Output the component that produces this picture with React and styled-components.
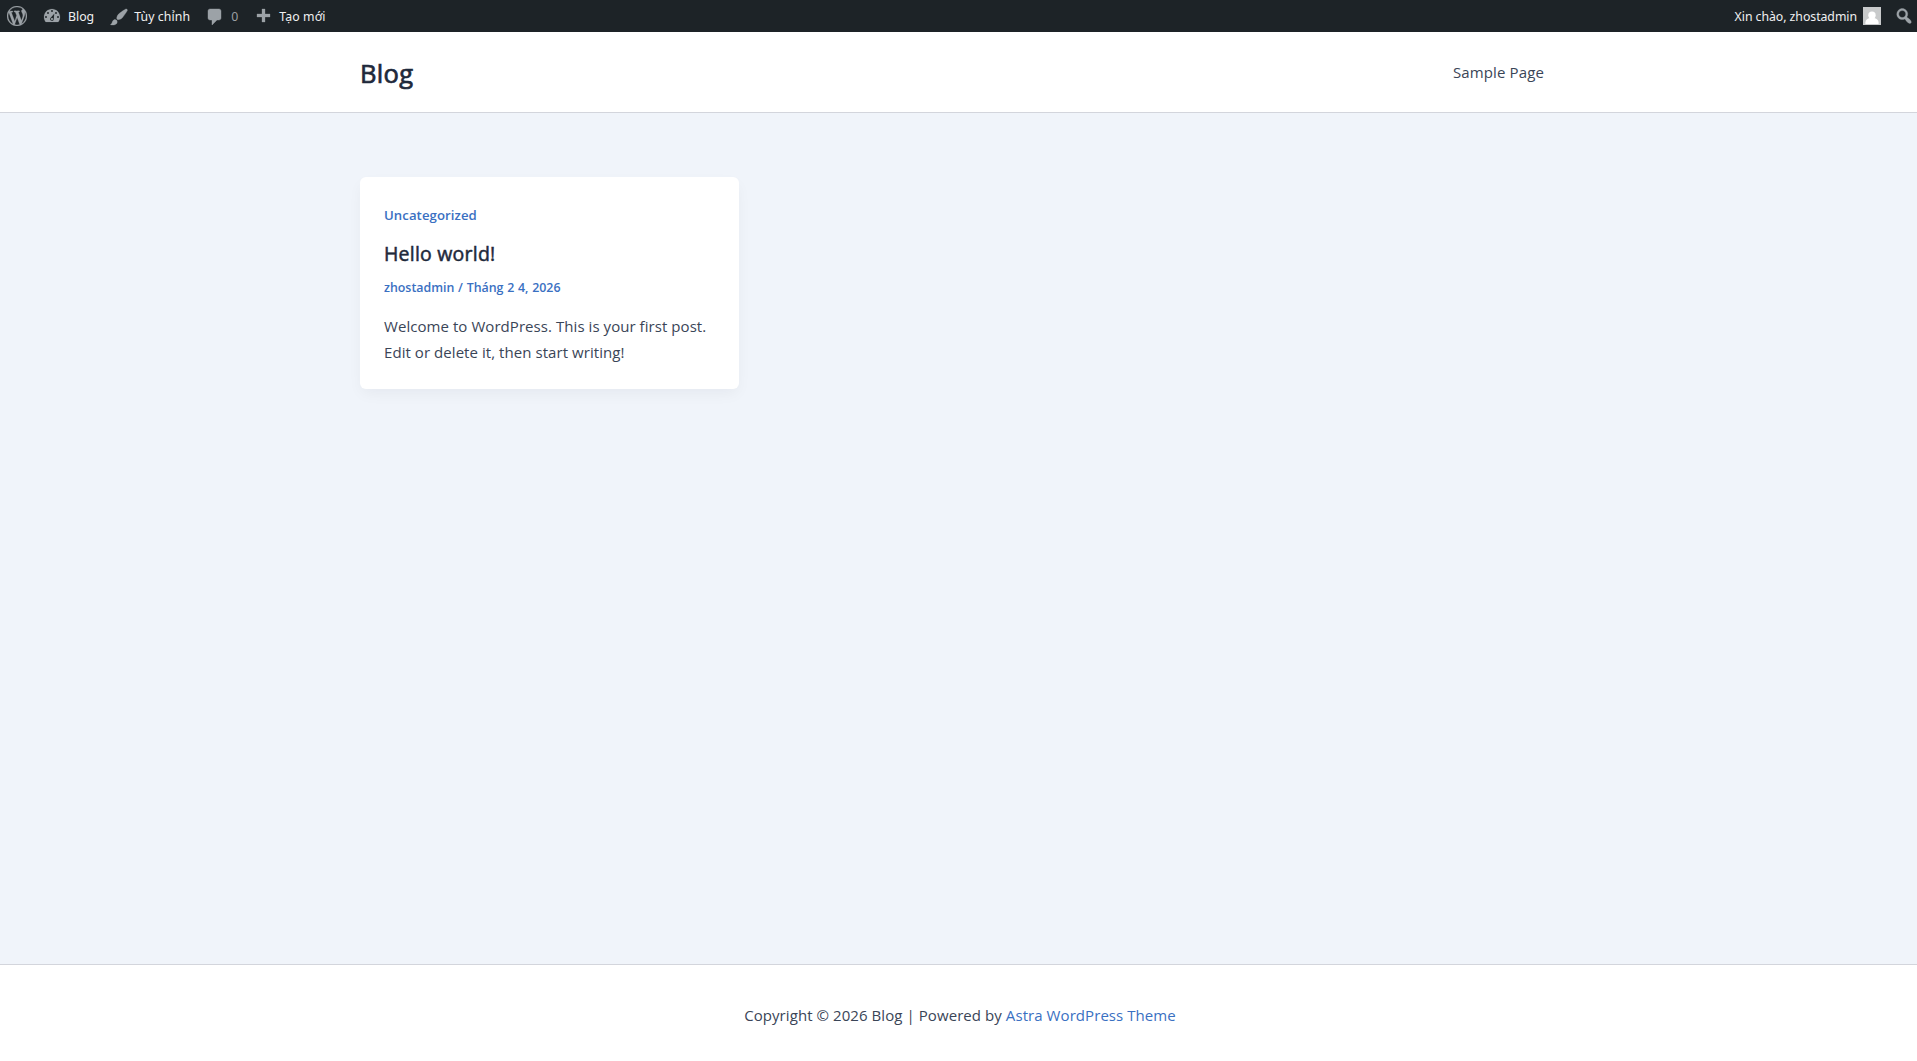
import React from "react";
import styled, { createGlobalStyle } from "styled-components";

const GlobalStyle = createGlobalStyle`
  *, *::before, *::after { box-sizing: border-box; }
  body {
    margin: 0;
    background: #f0f4fa;
    color: #3a4557;
    font-family: "Open Sans", "Noto Sans", sans-serif;
    font-size: 15px;
    overflow: hidden;
  }
  a { color: inherit; text-decoration: none; }
  h2, p { margin: 0; }
`;

const Page = styled.div`
  display: flex;
  flex-direction: column;
  height: 1061px;
`;

const AdminBar = styled.nav`
  display: flex;
  justify-content: space-between;
  height: 32px;
  background: #1d2327;
  color: #f0f0f1;
  font-family: "Noto Sans", "Open Sans", sans-serif;
  font-size: 12.3px;
  line-height: 32px;
`;

const BarGroup = styled.div`
  display: flex;
  padding: ${(p) => (p.$end ? "0 3px 0 0" : "0 0 0 7px")};
`;

const BarItem = styled.a`
  display: flex;
  align-items: center;
  gap: ${(p) => p.$gap ?? 6}px;
  margin-right: ${(p) => p.$after ?? 0}px;
`;

const BarLabel = styled.span`
  padding-top: 1px;
  color: ${(p) => (p.$muted ? "#9b9fa3" : "inherit")};
  letter-spacing: ${(p) => p.$track ?? 0}px;
  white-space: nowrap;
`;

const Glyph = styled.svg`
  display: block;
  flex: none;
  width: 20px;
  height: 20px;
  margin-top: ${(p) => p.$drop ?? 0}px;
  fill: #9ca2a7;
  stroke: #9ca2a7;
  stroke-width: ${(p) => p.$weight ?? 0};
`;

const Avatar = styled.svg`
  display: block;
  flex: none;
  width: 18px;
  height: 18px;
`;

const Header = styled.header`
  height: 81px;
  background: #fff;
  border-bottom: 1px solid #d3d5dc;
`;

const Container = styled.div`
  display: flex;
  align-items: ${(p) => (p.$top ? "flex-start" : "center")};
  justify-content: space-between;
  width: 1240px;
  height: 100%;
  margin: 0 0 0 340px;
  padding: 0 36px 0 20px;
`;

const SiteTitle = styled.a`
  padding-top: 2px;
  color: #1e293b;
  font-size: 25.5px;
  font-weight: 400;
  line-height: 30px;
  letter-spacing: 0.3px;
  -webkit-text-stroke: 0.7px #1e293b;
`;

const MenuLink = styled.a`
  line-height: 24px;
  letter-spacing: 0.12px;
`;

const Main = styled.main`
  flex: 1;
  padding-top: 64px;
`;

const Card = styled.article`
  display: flex;
  flex-direction: column;
  width: 379px;
  height: 212px;
  padding: 28px 24px 0;
  border-radius: 6px;
  background: #fff;
  box-shadow: 0 6px 15px -2px rgba(16, 24, 40, 0.05);
`;

const Category = styled.a`
  color: #3a70c2;
  font-size: 13.2px;
  font-weight: 600;
  line-height: 20px;
  letter-spacing: 0.06px;
`;

const PostTitle = styled.h2`
  margin-top: 16px;
  color: #1e293b;
  font-size: 19.5px;
  font-weight: 400;
  line-height: 26px;
  letter-spacing: 0.22px;
  -webkit-text-stroke: 0.5px #1e293b;
`;

const Meta = styled.div`
  margin-top: 12px;
  color: #3a70c2;
  font-size: 12.4px;
  font-weight: 600;
  line-height: 18px;
  word-spacing: 0.5px;
`;

const Excerpt = styled.p`
  margin-top: 16px;
  line-height: 26px;
  letter-spacing: 0.06px;
  white-space: nowrap;
`;

const Footer = styled.footer`
  display: flex;
  justify-content: center;
  height: 97px;
  padding: 37px 0 0 3px;
  border-top: 1px solid #d3d5dc;
  background: #fff;
  line-height: 26px;
  letter-spacing: 0.07px;
`;

const FooterLink = styled.a`
  color: #3a70c2;
`;

const icons = {
  wordpress:
    "M20 10c0-5.51-4.49-10-10-10C4.48 0 0 4.49 0 10c0 5.52 4.48 10 10 10 5.51 0 10-4.48 10-10zM7.78 15.37L4.37 6.22c.55-.02 1.17-.08 1.17-.08.5-.06.44-1.13-.06-1.11 0 0-1.45.11-2.37.11-.18 0-.37 0-.58-.01C4.12 2.69 6.87 1.11 10 1.11c2.33 0 4.45.87 6.05 2.34-.68-.11-1.65.39-1.65 1.58 0 .74.45 1.36.9 2.1.35.61.55 1.36.55 2.46 0 1.49-1.4 5-1.4 5l-3.03-8.37c.54-.02.82-.17.82-.17.5-.05.44-1.25-.06-1.22 0 0-1.44.12-2.38.12-.87 0-2.33-.12-2.33-.12-.5-.03-.56 1.2-.06 1.22l.92.08 1.26 3.41zM17.41 10c.24-.64.74-1.87.43-4.25.7 1.29 1.05 2.71 1.05 4.25 0 3.29-1.73 6.24-4.4 7.78.97-2.59 1.94-5.2 2.92-7.78zM6.1 18.09C3.12 16.65 1.11 13.53 1.11 10c0-1.3.23-2.48.72-3.59C3.25 10.3 4.67 14.2 6.1 18.09zm4.03-6.63l2.58 6.98c-.86.29-1.76.45-2.71.45-.79 0-1.57-.11-2.29-.33.81-2.38 1.62-4.74 2.42-7.1z",
  dashboard:
    "M3.76 16h12.48c1.1-1.37 1.76-3.11 1.76-5 0-4.42-3.58-8-8-8s-8 3.58-8 8c0 1.89.66 3.63 1.76 5zM10 4c.55 0 1 .45 1 1s-.45 1-1 1-1-.45-1-1 .45-1 1-1zM6 6c.55 0 1 .45 1 1s-.45 1-1 1-1-.45-1-1 .45-1 1-1zm8 0c.55 0 1 .45 1 1s-.45 1-1 1-1-.45-1-1 .45-1 1-1zM12.3 7.4L11.8 13.2a1.9 1.9 0 1 1-2.9-1.8zM4 10c.55 0 1 .45 1 1s-.45 1-1 1-1-.45-1-1 .45-1 1-1zm12 0c.55 0 1 .45 1 1s-.45 1-1 1-1-.45-1-1 .45-1 1-1zm-5 3c0-.55-.45-1-1-1s-1 .45-1 1 .45 1 1 1 1-.45 1-1z",
  brush:
    "M18.33 3.57s.27-.8-.31-1.36c-.53-.52-1.22-.24-1.22-.24-.61.3-5.76 3.47-7.67 5.57-.86.96-2.06 3.79-1.09 4.82.92.98 3.96-.17 4.79-1 2.06-2.06 5.21-7.17 5.5-7.79zM1.4 17.65c2.37-1.56 1.46-3.41 3.23-4.64.93-.65 2.22-.62 3.08.29.63.67.8 2.57-.16 3.46-1.57 1.45-4 1.55-6.15.89z",
  comment:
    "M5 2h9c1.1 0 2 .9 2 2v7c0 1.1-.9 2-2 2h-2l-5 5v-5H5c-1.1 0-2-.9-2-2V4c0-1.1.9-2 2-2z",
  plus: "M17 7v3h-5v5H9v-5H4V7h5V2h3v5h5z",
  search:
    "M12.14 4.18c1.87 1.87 2.11 4.75.72 6.89.12.1.22.21.36.31.2.16.47.36.81.59.34.24.56.39.66.47.42.31.73.57.94.78.32.32.6.65.84 1 .25.35.44.69.59 1.04.14.35.21.68.18 1-.02.32-.14.59-.36.81s-.49.34-.81.36c-.31.02-.65-.04-.99-.19-.35-.14-.7-.34-1.04-.59-.35-.24-.68-.52-1-.84-.21-.21-.47-.52-.77-.93-.1-.13-.25-.35-.47-.66-.22-.32-.4-.57-.56-.78-.16-.2-.29-.35-.44-.5-2.07 1.09-4.69.76-6.44-.98-2.14-2.15-2.14-5.64 0-7.78 2.15-2.15 5.63-2.15 7.78 0zm-1.41 6.36c1.36-1.37 1.36-3.58 0-4.95-1.37-1.37-3.59-1.37-4.95 0-1.37 1.37-1.37 3.58 0 4.95 1.36 1.37 3.58 1.37 4.95 0z",
};

const Icon = ({ name, drop, weight }) => (
  <Glyph viewBox="0 0 20 20" $drop={drop} $weight={weight} aria-hidden="true">
    <path fillRule="evenodd" d={icons[name]} />
  </Glyph>
);

export default function App() {
  return (
    <>
      <GlobalStyle />
      <Page>
        <AdminBar>
          <BarGroup>
            <BarItem href="#" $after={15}>
              <Icon name="wordpress" weight={0.25} />
            </BarItem>
            <BarItem href="#" $after={15}>
              <Icon name="dashboard" weight={0.15} />
              <BarLabel>Blog</BarLabel>
            </BarItem>
            <BarItem href="#" $gap={5} $after={15}>
              <Icon name="brush" drop={1} weight={0.3} />
              <BarLabel $track={0.1}>Tùy chỉnh</BarLabel>
            </BarItem>
            <BarItem href="#" $after={15}>
              <Icon name="comment" drop={2} weight={0.4} />
              <BarLabel $muted>0</BarLabel>
            </BarItem>
            <BarItem href="#">
              <Icon name="plus" drop={2} weight={0.3} />
              <BarLabel $track={0.1}>Tạo mới</BarLabel>
            </BarItem>
          </BarGroup>
          <BarGroup $end>
            <BarItem href="#" $after={13}>
              <BarLabel $track={-0.05}>Xin chào, zhostadmin</BarLabel>
              <Avatar viewBox="0 0 18 18" aria-hidden="true">
                <rect width="18" height="18" fill="#c8cacb" />
                <circle cx="9" cy="8.3" r="3.7" fill="#fff" />
                <path d="M2.4 17v-1.6c0-2.5 2.2-3.8 4.5-4.3h4.2c2.3.5 4.5 1.8 4.5 4.3V17z" fill="#fff" />
              </Avatar>
            </BarItem>
            <BarItem href="#">
              <Icon name="search" weight={0.3} />
            </BarItem>
          </BarGroup>
        </AdminBar>

        <Header>
          <Container>
            <SiteTitle href="#">Blog</SiteTitle>
            <MenuLink href="#">Sample Page</MenuLink>
          </Container>
        </Header>

        <Main>
          <Container $top>
            <Card>
              <Category href="#">Uncategorized</Category>
              <PostTitle>
                <a href="#">Hello world!</a>
              </PostTitle>
              <Meta>
                <a href="#">zhostadmin</a> / <span>Tháng 2 4, 2026</span>
              </Meta>
              <Excerpt>
                Welcome to WordPress. This is your first post.
                <br />
                Edit or delete it, then start writing!
              </Excerpt>
            </Card>
          </Container>
        </Main>

        <Footer>
          <p>
            Copyright © 2026 Blog | Powered by <FooterLink href="#">Astra WordPress Theme</FooterLink>
          </p>
        </Footer>
      </Page>
    </>
  );
}
